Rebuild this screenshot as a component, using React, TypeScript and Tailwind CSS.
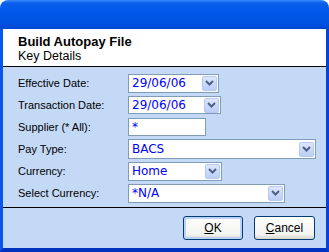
import React from 'react';

type Field = {
  label: string;
  value: string;
  width: string;
  drop: boolean;
  height: string;
};

const fields: Field[] = [
  { label: 'Effective Date:', value: '29/06/06', width: 'w-[91px]', drop: true, height: 'h-[19px]' },
  { label: 'Transaction Date:', value: '29/06/06', width: 'w-[93px]', drop: true, height: 'h-[18px]' },
  { label: 'Supplier (* All):', value: '*', width: 'w-[78px]', drop: false, height: 'h-[18px]' },
  { label: 'Pay Type:', value: 'BACS', width: 'w-[188px]', drop: true, height: 'h-[20px]' },
  { label: 'Currency:', value: 'Home', width: 'w-[94px]', drop: true, height: 'h-[19px]' },
  { label: 'Select Currency:', value: '*N/A', width: 'w-[157px]', drop: true, height: 'h-[19px]' },
];

const Chevron = () => (
  <svg width="9" height="6" viewBox="0 0 9 6">
    <path d="M1 1 L4.5 4.5 L8 1" fill="none" stroke="#4D6185" strokeWidth="2" />
  </svg>
);

const DropButton = () => (
  <div className="flex h-[15px] w-[15px] shrink-0 items-center justify-center rounded-[2px] border border-[#B6C9F2] bg-[linear-gradient(#DCE6FD,#BACEF8)]">
    <Chevron />
  </div>
);

const FieldBox = ({ f }: { f: Field }) => (
  <div className={`flex ${f.width} ${f.height} items-center border border-[#7F9DB9] bg-white pl-[3px] pr-px`}>
    <span className="flex-1 font-['DejaVu_Sans',sans-serif] text-[12px] leading-none text-[#0000FF]">{f.value}</span>
    {f.drop && <DropButton />}
  </div>
);

export default function App() {
  return (
    <div className="flex h-[252px] w-[329px] flex-col bg-white font-['Liberation_Sans',Arial,sans-serif] text-black">
      {/* title bar */}
      <div className="h-[29px] shrink-0 rounded-t-[8px] bg-[linear-gradient(#3A8CF8_0px,#0A5FEC_3px,#0058E8_12px,#0054E3_22px,#0045D2_29px)]" />

      <div className="flex flex-1 flex-col border-x-[3px] border-b-[4px] border-l-[#0856EA] border-r-[#0344D4] border-b-[#0032BE]">
        {/* header */}
        <div className="h-[38px] shrink-0 border-b border-black bg-white pl-[15px] pt-[6px]">
          <div className="text-[13px] font-bold leading-[14px]">Build Autopay File</div>
          <div className="text-[12.5px] leading-[14px]">Key Details</div>
        </div>

        <div className="flex flex-1 flex-col bg-[#C4D9F6]">
          <div className="flex flex-col pt-[5px]">
            {fields.map((f) => (
              <div key={f.label} className="flex h-[22px] items-center">
                <div className="w-[125px] shrink-0 pl-[15px] text-[11px]">{f.label}</div>
                <FieldBox f={f} />
              </div>
            ))}
          </div>

          <div className="mt-[3px] h-px bg-black" />

          <div className="flex flex-1 items-start justify-end gap-[11px] pr-[11px] pt-[8px]">
            <button className="h-[24px] w-[60px] rounded-[3px] border border-[#003C74] bg-[linear-gradient(#FFFFFF,#F3F3EF_80%,#D8D4CB)] text-[12px] shadow-[inset_0_0_0_2px_#BCD2F8]">
              <span className="underline">O</span>K
            </button>
            <button className="h-[24px] w-[61px] rounded-[3px] border border-[#003C74] bg-[linear-gradient(#FFFFFF,#F3F3EF_80%,#D8D4CB)] text-[12px]">
              <span className="underline">C</span>ancel
            </button>
          </div>
        </div>
      </div>
    </div>
  );
}
